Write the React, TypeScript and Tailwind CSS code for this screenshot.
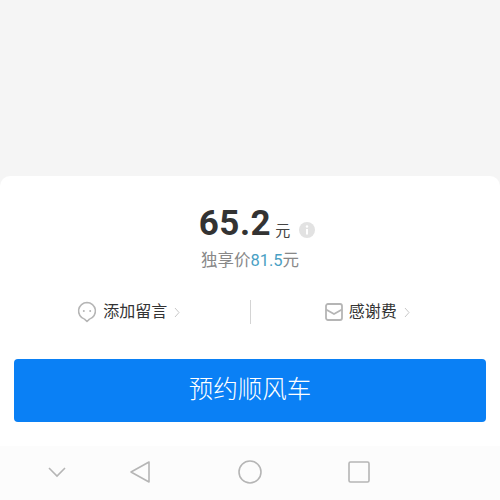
const cjk = { fontFamily: '"Roboto", "Noto Sans CJK SC", sans-serif' };

export default function App() {
  return (
    <div className="w-[500px] h-[500px] flex flex-col bg-[#f5f5f5] overflow-hidden" style={cjk}>
      <div className="h-[176px] shrink-0" />
      <div className="flex-1 flex flex-col bg-white rounded-t-[10px]">
        <div className="h-[270px] shrink-0 flex flex-col items-center">
          <div className="mt-[25px] h-[46px] flex items-center ml-[14px]">
            <span className="text-[35px] font-bold text-[#333333] tracking-[0.5px]">65.2</span>
            <span className="text-[15px] text-[#444444] ml-[4px] mt-[14px]">元</span>
            <span className="ml-[9px] mt-[12px] w-[16px] h-[16px] rounded-full bg-[#e2e2e2] flex items-center justify-center">
              <svg width="8" height="10" viewBox="0 0 8 10">
                <circle cx="4" cy="1.5" r="1.2" fill="#fff" />
                <rect x="3" y="4" width="2" height="5.5" fill="#fff" />
              </svg>
            </span>
          </div>
          <div className="mt-[2px] h-[24px] flex items-center text-[16.5px] text-[#888888]">
            独享价<span className="text-[#4a9fc4]">81.5</span>元
          </div>
          <div className="mt-[25px] w-full h-[28px] grid grid-cols-[1fr_1px_1fr] items-center">
            <div className="flex items-center justify-center pl-[8px]">
              <svg width="20" height="22" viewBox="0 0 20 22" fill="none" stroke="#b5b5b5" strokeWidth="1.5">
                <path d="M10 1.5a8.5 8.5 0 0 1 2.5 16.6L10 20.5l-2.5-2.4A8.5 8.5 0 0 1 10 1.5Z" strokeLinejoin="round" />
                <circle cx="6.8" cy="10" r="1" fill="#b5b5b5" stroke="none" />
                <circle cx="13.2" cy="10" r="1" fill="#b5b5b5" stroke="none" />
              </svg>
              <span className="ml-[6px] text-[16px] text-[#333333]">添加留言</span>
              <svg className="ml-[7px]" width="6" height="11" viewBox="0 0 6 11" fill="none" stroke="#c8c8c8" strokeWidth="1">
                <path d="M1 1l4 4.5L1 10" />
              </svg>
            </div>
            <div className="w-px h-[24px] bg-[#d4d4d4]" />
            <div className="flex items-center justify-center pr-[16px]">
              <svg width="18" height="18" viewBox="0 0 18 18" fill="none" stroke="#b5b5b5" strokeWidth="1.8">
                <rect x="1" y="1" width="16" height="16" rx="2" />
                <path d="M1 6.5l8 4.5 8-4.5" />
              </svg>
              <span className="ml-[6px] text-[16px] text-[#333333]">感谢费</span>
              <svg className="ml-[7px]" width="6" height="11" viewBox="0 0 6 11" fill="none" stroke="#c8c8c8" strokeWidth="1">
                <path d="M1 1l4 4.5L1 10" />
              </svg>
            </div>
          </div>
          <div className="mt-[33px] w-full px-[14px]">
            <button className="w-full h-[63px] rounded-[4px] bg-[#0a80f5] text-white text-[24.5px] font-light flex items-center justify-center">
              预约顺风车
            </button>
          </div>
        </div>
        <div className="flex-1 bg-[#fcfcfc] flex items-center pb-[3px]">
          <svg className="ml-[48px]" width="18" height="12" viewBox="0 0 18 12" fill="none" stroke="#b5b5b5" strokeWidth="1.6">
            <path d="M1 2l8 8 8-8" />
          </svg>
          <svg className="ml-[63px]" width="22" height="24" viewBox="0 0 22 24" fill="none" stroke="#b5b5b5" strokeWidth="1.6" strokeLinejoin="round">
            <path d="M20 2v20L2 12Z" />
          </svg>
          <svg className="ml-[87px]" width="24" height="24" viewBox="0 0 24 24" fill="none" stroke="#b5b5b5" strokeWidth="1.6">
            <circle cx="12" cy="12" r="11" />
          </svg>
          <svg className="ml-[86px]" width="22" height="22" viewBox="0 0 22 22" fill="none" stroke="#b5b5b5" strokeWidth="1.6">
            <rect x="1" y="1" width="20" height="20" rx="1.5" />
          </svg>
        </div>
      </div>
    </div>
  );
}
